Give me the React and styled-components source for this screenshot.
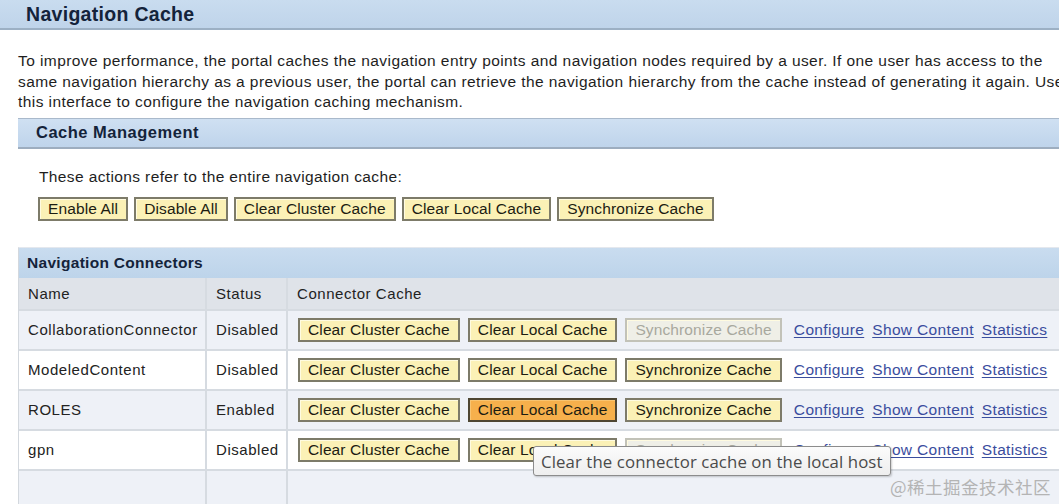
import React from "react";
import styled, { createGlobalStyle } from "styled-components";

const GlobalStyle = createGlobalStyle`
  html, body { margin: 0; padding: 0; background: #ffffff; overflow: hidden; }
  body { font-family: "Liberation Sans", Arial, sans-serif; color: #1e1e1e; }
`;

const Page = styled.div`
  position: relative;
  width: 1059px;
  height: 504px;
  overflow: hidden;
  background: #fff;
`;

const PageHeader = styled.div`
  height: 28px;
  background: linear-gradient(#c9dcef, #bfd4ea);
  border-bottom: 2px solid #9cb0c4;
  display: flex;
  align-items: center;
  padding-left: 26px;
  font-weight: bold;
  font-size: 19.5px;
  letter-spacing: 0.3px;
  color: #14233a;
`;

const Intro = styled.p`
  margin: 21px 0 0 18px;
  font-size: 15.5px;
  line-height: 20.5px;
  letter-spacing: 0.42px;
  white-space: nowrap;
`;

const SectionBar = styled.div`
  margin: 5px 0 0 18px;
  height: 28px;
  border-top: 1px solid #a9b9cb;
  border-bottom: 2px solid #9dadbf;
  background: linear-gradient(#cfe0f2, #bfd4eb);
  display: flex;
  align-items: center;
  padding-left: 18px;
  font-weight: bold;
  font-size: 16.5px;
  letter-spacing: 0.5px;
  color: #14233a;
`;

const SectionBody = styled.div`
  padding: 18px 0 0 39px;
`;

const Note = styled.div`
  font-size: 15.5px;
  line-height: 20px;
  letter-spacing: 0.38px;
`;

const ButtonRow = styled.div`
  display: flex;
  align-items: center;
  gap: ${(p) => p.$gap || 6}px;
  margin-top: ${(p) => p.$top || 0}px;
  margin-left: ${(p) => p.$left || 0}px;
`;

const Btn = styled.span`
  display: inline-flex;
  align-items: center;
  height: 20px;
  padding: 0 8px;
  font-size: 15.5px;
  letter-spacing: 0.12px;
  white-space: nowrap;
  border: 2px solid
    ${(p) => (p.$variant === "disabled" ? "#c2c2b8" : p.$variant === "active" ? "#4e4632" : "#7d7b69")};
  background: ${(p) =>
    p.$variant === "disabled" ? "#efefe7" : p.$variant === "active" ? "#f6b04c" : "#fbf1b6"};
  color: ${(p) => (p.$variant === "disabled" ? "#a8a89e" : "#1c1c12")};
  box-shadow: inset 1px 1px 0
    ${(p) => (p.$variant === "active" ? "#f9c470" : "#fffbe0")};
`;

const Table = styled.div`
  margin: 26px 0 0 18px;
  border-top: 1px solid #e4e8ee;
  border-left: 1px solid #d3d8de;
`;

const TableTitle = styled.div`
  height: 30px;
  background: linear-gradient(#c9dcef, #bdd4ea);
  display: flex;
  align-items: center;
  padding-left: 8px;
  font-weight: bold;
  font-size: 15.5px;
  letter-spacing: 0.3px;
  color: #14233a;
`;

const Row = styled.div`
  display: grid;
  grid-template-columns: 188px 81px 1fr;
  height: ${(p) => p.$h || 40}px;
  background: ${(p) => p.$bg};
  border-bottom: 2px solid #d6dbe1;
`;

const Cell = styled.div`
  display: flex;
  align-items: center;
  padding-left: ${(p) => p.$pad || 9}px;
  border-right: 2px solid #d6dbe1;
  font-size: 15px;
  letter-spacing: 0.55px;
  color: #222;
  white-space: nowrap;
  &:last-child { border-right: none; }
`;

const Links = styled.div`
  display: flex;
  gap: 8px;
  margin-left: 12px;
`;

const Link = styled.a`
  color: #3a4d9e;
  text-decoration: underline;
  text-underline-offset: 2px;
  font-size: 15.5px;
  letter-spacing: 0.35px;
  cursor: pointer;
`;

const Tooltip = styled.div`
  position: absolute;
  left: 533px;
  top: 446px;
  height: 28px;
  padding: 0 7px;
  display: flex;
  align-items: center;
  border: 1px solid #8c8c8c;
  border-radius: 3px;
  background: linear-gradient(#fbfbfb, #eeeeee);
  box-shadow: 1px 1px 2px rgba(0, 0, 0, 0.2);
  font-family: "Open Sans", "Noto Sans", sans-serif;
  font-size: 16.8px;
  letter-spacing: 0.1px;
  color: #4a4a4a;
  white-space: nowrap;
`;

const Watermark = styled.div`
  position: absolute;
  right: 8px;
  bottom: 5px;
  font-family: "Noto Sans CJK SC", sans-serif;
  font-size: 17.5px;
  color: #b4b4b4;
  letter-spacing: 0.5px;
`;

const rows = [
  { name: "CollaborationConnector", status: "Disabled", sync: "disabled", local: "normal", bg: "#eef1f7" },
  { name: "ModeledContent", status: "Disabled", sync: "normal", local: "normal", bg: "#ffffff" },
  { name: "ROLES", status: "Enabled", sync: "normal", local: "active", bg: "#eef1f7" },
  { name: "gpn", status: "Disabled", sync: "disabled", local: "normal", bg: "#ffffff" },
];

export default function App() {
  return (
    <Page>
      <GlobalStyle />
      <PageHeader>Navigation Cache</PageHeader>
      <Intro>
        To improve performance, the portal caches the navigation entry points and navigation nodes required by a user. If one user has access to the
        <br />
        same navigation hierarchy as a previous user, the portal can retrieve the navigation hierarchy from the cache instead of generating it again. Use
        <br />
        this interface to configure the navigation caching mechanism.
      </Intro>
      <SectionBar>Cache Management</SectionBar>
      <SectionBody>
        <Note>These actions refer to the entire navigation cache:</Note>
        <ButtonRow $top={10} $left={-1} $gap={6}>
          <Btn>Enable All</Btn>
          <Btn>Disable All</Btn>
          <Btn>Clear Cluster Cache</Btn>
          <Btn>Clear Local Cache</Btn>
          <Btn>Synchronize Cache</Btn>
        </ButtonRow>
      </SectionBody>
      <Table>
        <TableTitle>Navigation Connectors</TableTitle>
        <Row $h={31} $bg="#dfe3e9">
          <Cell>Name</Cell>
          <Cell>Status</Cell>
          <Cell>Connector Cache</Cell>
        </Row>
        {rows.map((r) => (
          <Row key={r.name} $h={38} $bg={r.bg}>
            <Cell>{r.name}</Cell>
            <Cell>{r.status}</Cell>
            <Cell $pad={10}>
              <ButtonRow $gap={8}>
                <Btn>Clear Cluster Cache</Btn>
                <Btn $variant={r.local}>Clear Local Cache</Btn>
                <Btn $variant={r.sync}>Synchronize Cache</Btn>
              </ButtonRow>
              <Links>
                <Link>Configure</Link>
                <Link>Show Content</Link>
                <Link>Statistics</Link>
              </Links>
            </Cell>
          </Row>
        ))}
        <Row $h={40} $bg="#eef1f7">
          <Cell />
          <Cell />
          <Cell />
        </Row>
      </Table>
      <Tooltip>Clear the connector cache on the local host</Tooltip>
      <Watermark>@稀土掘金技术社区</Watermark>
    </Page>
  );
}
